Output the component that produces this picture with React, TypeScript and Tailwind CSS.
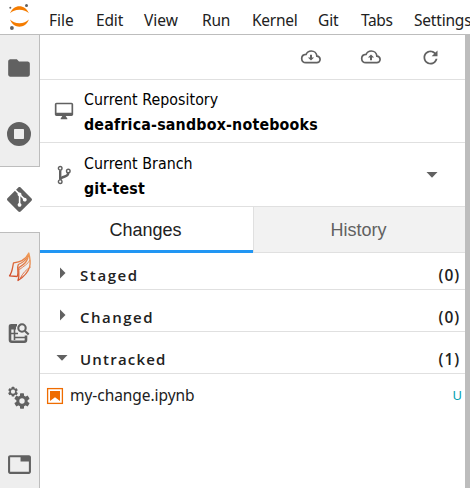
import type { ReactNode } from 'react';

const menu = [
  { label: 'File', cls: 'w-[47px] tracking-[-0.05px]' },
  { label: 'Edit', cls: 'w-[48px] tracking-[-0.15px]' },
  { label: 'View', cls: 'w-[58px] tracking-[0px]' },
  { label: 'Run', cls: 'w-[50px] tracking-[-0.2px]' },
  { label: 'Kernel', cls: 'w-[66px] tracking-[-0.25px]' },
  { label: 'Git', cls: 'w-[43px] tracking-[-0.1px]' },
  { label: 'Tabs', cls: 'w-[53px] tracking-[-0.35px]' },
  { label: 'Settings', cls: 'w-[64px] tracking-[-0.2px]' },
];

function JupyterLogo() {
  return (
    <svg className="block shrink-0" width="40" height="34" viewBox="0 0 40 34">
      <path d="M10 13.300C12 8.700 15.500 6.200 19.400 6.200S27 8.700 28.900 13.300C26.500 11 23.300 9.700 19.400 9.700S12.400 11 10 13.300z" fill="#f57c00" />
      <path d="M10 19.600C12 24.400 15.500 26.800 19.400 26.800S27 24.400 28.900 19.600C26.500 22 23.300 23.300 19.400 23.300S12.400 22 10 19.600z" fill="#f57c00" />
      <circle cx="26.500" cy="5.600" r="1.500" fill="#616161" />
      <circle cx="10.300" cy="7.700" r="1" fill="#616161" />
      <circle cx="11.900" cy="28" r="1.900" fill="#616161" />
    </svg>
  );
}

function FolderIcon() {
  return (
    <svg width="26" height="26" viewBox="0 0 24 24" fill="#616161">
      <path d="M10 4H4c-1.100 0-1.990.9-1.990 2L2 18c0 1.100.9 2 2 2h16c1.100 0 2-.9 2-2V8c0-1.100-.9-2-2-2h-8l-2-2z" />
    </svg>
  );
}

function RunningIcon() {
  return (
    <svg width="24" height="24" viewBox="0 0 24 24" fill="#616161" fillRule="evenodd">
      <path d="M12 0a12 12 0 1 0 0 24a12 12 0 0 0 0-24zM7.800 7h8.400q.8 0 .8.800v8.400q0 .8-.8.800H7.800q-.8 0-.8-.8V7.800q0-.8.800-.8z" />
    </svg>
  );
}

function GitIcon() {
  return (
    <svg width="25" height="25" viewBox="0 0 24 24" fill="#616161">
      <path d="M23.546 10.930L13.067.452c-.604-.603-1.582-.603-2.188 0L8.708 2.627l2.760 2.760c.645-.215 1.379-.07 1.889.441.516.515.658 1.258.438 1.900l2.658 2.660c.645-.223 1.387-.078 1.900.435.721.72.721 1.884 0 2.604-.719.719-1.881.719-2.600 0-.539-.541-.674-1.337-.404-1.996L12.860 8.955v6.525c.176.086.342.203.488.348.713.721.713 1.883 0 2.600-.719.721-1.889.721-2.609 0-.719-.719-.719-1.879 0-2.598.182-.18.387-.316.605-.406V8.835c-.217-.091-.424-.222-.6-.401-.545-.545-.676-1.342-.396-2.009L7.636 3.700.450 10.881c-.6.605-.6 1.584 0 2.189l10.480 10.477c.604.604 1.582.604 2.186 0l10.430-10.430c.605-.603.605-1.582 0-2.187" />
    </svg>
  );
}

function FlameIcon() {
  return (
    <svg width="26" height="32" viewBox="0 0 26 32" fill="none" strokeLinejoin="round">
      <defs>
        <linearGradient id="flame" x1="0" y1="32" x2="26" y2="2" gradientUnits="userSpaceOnUse">
          <stop offset="0.150" stopColor="#cf4525" />
          <stop offset="1" stopColor="#f3a45d" />
        </linearGradient>
      </defs>
      <g stroke="url(#flame)" strokeWidth="1.300">
        <path d="M10.500 25.500L2.500 24.800C5.500 21 5.500 16 6.500 12C12 11 18 10 21.800 2C24 11 25.500 20 11 29.500C13 24 11 20 12 16.500C17 13.500 21 11 21.800 2" />
        <path d="M10.500 25.500C12 20 9.500 18 11.300 13.500C15 12 19 9 21 5" />
        <path d="M13.500 27C15.500 22.500 19.500 18 23.800 16" strokeWidth="0.900" />
        <path d="M12.500 18.500C17 15 21 13 23 9" strokeWidth="0.900" />
      </g>
    </svg>
  );
}

function InspectIcon() {
  return (
    <svg width="22" height="22" viewBox="0 0 22 22" fill="none" stroke="#616161">
      <path d="M9 3.200H3.200Q2 3.200 2 4.400V18Q2 19.700 3.700 19.700H16.300Q18 19.700 18 18V13.500" strokeWidth="2.600" />
      <path d="M2.500 5.500H8" strokeWidth="4" />
      <path d="M6.500 4V18M3 11.500H10M6 15.500H17" strokeWidth="1.600" />
      <circle cx="14" cy="6" r="3.700" strokeWidth="2.100" />
      <path d="M16.700 8.700L20.700 12.500" strokeWidth="2.200" />
    </svg>
  );
}

function Gear({ cx, cy, r, hole }: { cx: number; cy: number; r: number; hole: number }) {
  return (
    <g transform={`translate(${cx} ${cy}) scale(${r / 10})`}>
      {[0, 60, 120].map((a) => (
        <rect key={a} x="-2.600" y="-10" width="5.200" height="20" rx="0.800" transform={`rotate(${a})`} fill="#616161" />
      ))}
      <circle r="7.400" fill="#616161" />
      <circle r={hole} fill="#eeeeee" />
    </g>
  );
}

function GearsIcon() {
  return (
    <svg width="24" height="24" viewBox="0 0 24 24">
      <Gear cx={6} cy={5.700} r={4.900} hole={4.300} />
      <Gear cx={15} cy={15} r={7.700} hole={3.500} />
    </svg>
  );
}

function TabIcon() {
  return (
    <svg width="25" height="25" viewBox="0 0 24 24" fill="#616161">
      <path d="M21 3H3c-1.100 0-2 .9-2 2v14c0 1.100.9 2 2 2h18c1.100 0 2-.9 2-2V5c0-1.100-.9-2-2-2zm0 16H3V5h10v4h8v10z" />
    </svg>
  );
}

function CloudIcon({ up = false }: { up?: boolean }) {
  return (
    <svg width="22" height="16" viewBox="0 0 22 16">
      <path d="M5.800 13.700H16.700A3.300 3.300 0 0 0 16.900 7.100C16.600 3.900 14.100 2 11.300 2C8.900 2 7 3.300 6.100 5.300C3.400 5.400 1.700 7.200 1.700 9.500C1.700 12 3.500 13.700 5.800 13.700z" fill="none" stroke="#616161" strokeWidth="1.700" />
      <path d={up ? 'M11 5.500L14.100 8.600H12V11.300H10V8.600H7.900z' : 'M11 11.500L14.100 8.400H12V5.700H10V8.400H7.900z'} fill="#616161" />
    </svg>
  );
}

function RefreshIcon() {
  return (
    <svg width="21" height="21" viewBox="0 0 18 18" fill="#616161">
      <path d="M9 13.500c-2.490 0-4.500-2.010-4.500-4.500S6.510 4.500 9 4.500c1.240 0 2.360.52 3.170 1.330L10 8h5V3l-1.760 1.760C12.150 3.680 10.660 3 9 3 5.690 3 3.010 5.690 3.010 9S5.690 15 9 15c2.970 0 5.430-2.160 5.900-5h-1.520c-.46 2-2.240 3.500-4.380 3.500z" />
    </svg>
  );
}

function DesktopIcon() {
  return (
    <svg width="20" height="20" viewBox="0 0 24 24" fill="#616161">
      <path d="M21 2H3c-1.100 0-2 .9-2 2v12c0 1.100.9 2 2 2h7l-2 3v1h8v-1l-2-3h7c1.100 0 2-.9 2-2V4c0-1.100-.9-2-2-2zm0 12H3V4h18v10z" />
    </svg>
  );
}

function BranchIcon() {
  return (
    <svg width="15" height="20" viewBox="0 0 15 20" fill="none" stroke="#616161">
      <circle cx="3.200" cy="3.300" r="1.800" strokeWidth="1.400" />
      <circle cx="3.200" cy="16.700" r="1.800" strokeWidth="1.400" />
      <circle cx="11.300" cy="6" r="1.800" strokeWidth="1.400" />
      <path d="M3.200 5.200V14.800" strokeWidth="2.400" />
      <path d="M11.300 7.800C11.300 13 4.500 10.500 3.400 14.400" strokeWidth="2.400" />
    </svg>
  );
}

function CaretDown() {
  return (
    <svg className="block" width="12" height="6" viewBox="0 0 12 6">
      <path d="M.5 0H11.500L6 5.700z" fill="#616161" />
    </svg>
  );
}

function CaretRight() {
  return (
    <svg className="block" width="12" height="12" viewBox="0 0 12 12">
      <path d="M4 .5V11.500L9.500 6z" fill="#616161" />
    </svg>
  );
}

function NotebookIcon() {
  return (
    <svg width="18" height="18" viewBox="0 0 18 18">
      <rect x="1.600" y="1.600" width="14.800" height="14.800" fill="none" stroke="#ef6c00" strokeWidth="1.300" />
      <path d="M4 4H14V14L9 10.200L4 14z" fill="#ef6c00" />
    </svg>
  );
}

function Section({ label, count, open = false, cls, labelCls }: { label: string; count: number; open?: boolean; cls: string; labelCls: string }) {
  return (
    <div className={`flex shrink-0 items-end border-b border-[#e0e0e0] pr-[5px] pl-4 font-semibold text-[#212121] ${cls}`}>
      <div className={open ? 'w-6 pb-3' : 'w-6 pb-[10px]'}>{open ? <CaretDown /> : <CaretRight />}</div>
      <div className={`mb-[5px] h-[18px] flex-1 overflow-hidden font-['Open_Sans'] text-[15px] leading-[18px] ${labelCls}`}>{label}</div>
      <div className="mb-[3px] font-['Open_Sans'] text-[15.500px] leading-[22px] tracking-[0.900px]">({count})</div>
    </div>
  );
}

function InfoRow({ icon, title, value, cls, children }: { icon: ReactNode; title: string; value: string; cls: string; children?: ReactNode }) {
  return (
    <div className={`flex shrink-0 items-center border-b border-[#e0e0e0] text-black ${cls}`}>
      <div className="flex w-[44px] justify-center pl-1">{icon}</div>
      <div className="flex-1 pt-[2px] font-['DejaVu_Sans_Condensed','DejaVu_Sans'] text-[15.800px] leading-[25px] whitespace-nowrap">
        <div className="tracking-[0.050px]">{title}</div>
        <div className="font-bold tracking-[0.200px]">{value}</div>
      </div>
      {children}
    </div>
  );
}

export default function App() {
  return (
    <div className="flex h-[488px] w-[470px] flex-col overflow-hidden bg-white font-['Open_Sans',sans-serif]">
      <header className="flex h-[35px] shrink-0 border-b border-[#bdbdbd]">
        <JupyterLogo />
        <nav className="flex pt-[9px] pl-[9px] text-[15.500px] leading-[22px] text-[#212121]">
          {menu.map((m) => (
            <span key={m.label} className={`shrink-0 font-['Noto_Sans'] whitespace-nowrap ${m.cls}`}>{m.label}</span>
          ))}
        </nav>
      </header>
      <div className="flex min-h-0 flex-1">
        <aside className="flex w-10 shrink-0 flex-col">
          <div className="flex h-[132px] shrink-0 flex-col border-r border-b border-[#bdbdbd] bg-[#eeeeee]">
            <div className="flex h-[67px] items-center justify-center pr-px"><FolderIcon /></div>
            <div className="flex h-[65px] items-center justify-center pr-px"><RunningIcon /></div>
          </div>
          <div className="flex h-[65px] shrink-0 items-center justify-center pr-[2px]"><GitIcon /></div>
          <div className="flex flex-1 flex-col border-t border-r border-[#bdbdbd] bg-[#eeeeee]">
            <div className="flex h-[67px] items-center justify-center"><FlameIcon /></div>
            <div className="flex h-[65px] items-center justify-center pr-px"><InspectIcon /></div>
            <div className="flex h-[66px] items-center justify-center pr-px"><GearsIcon /></div>
            <div className="flex h-[66px] shrink-0 items-center justify-center pr-px"><TabIcon /></div>
          </div>
        </aside>
        <main className="flex min-w-0 flex-1 flex-col">
          <div className="flex h-[45px] shrink-0 items-center justify-end gap-[38px] border-b border-[#e0e0e0] pr-[24px]">
            <CloudIcon />
            <CloudIcon up />
            <RefreshIcon />
          </div>
          <InfoRow icon={<DesktopIcon />} title="Current Repository" value="deafrica-sandbox-notebooks" cls="h-[63px]" />
          <InfoRow icon={<BranchIcon />} title="Current Branch" value="git-test" cls="h-16">
            <div className="pr-[27px]"><CaretDown /></div>
          </InfoRow>
          <div className="flex h-[46px] shrink-0 font-['Liberation_Sans'] text-[18px]">
            <div className="flex w-[213px] items-center justify-center border-b-[3px] border-[#2196f3] pt-[3px] pr-[2px] text-[#212121]">Changes</div>
            <div className="flex flex-1 items-center justify-center border-b border-l border-[#e0e0e0] bg-[#f2f2f2] pt-px pr-[2px] text-[#616161]">History</div>
          </div>
          <Section label="Staged" count={0} cls="h-[37px]" labelCls="tracking-[1.600px]" />
          <Section label="Changed" count={0} cls="h-[42px]" labelCls="tracking-[1.500px]" />
          <Section label="Untracked" count={1} open cls="h-[42px]" labelCls="tracking-[1.200px]" />
          <div className="flex h-[43px] shrink-0 items-center pr-[3px] pl-[6px]">
            <NotebookIcon />
            <span className="flex-1 pl-[6px] font-['Noto_Sans'] text-[15.500px] tracking-[-0.050px] text-[#212121]">my-change.ipynb</span>
            <span className="font-['Noto_Sans'] text-[13px] text-[#00a0b0]">U</span>
          </div>
        </main>
        <div className="w-[5px] shrink-0 bg-[#bdbdbd]" />
      </div>
    </div>
  );
}
